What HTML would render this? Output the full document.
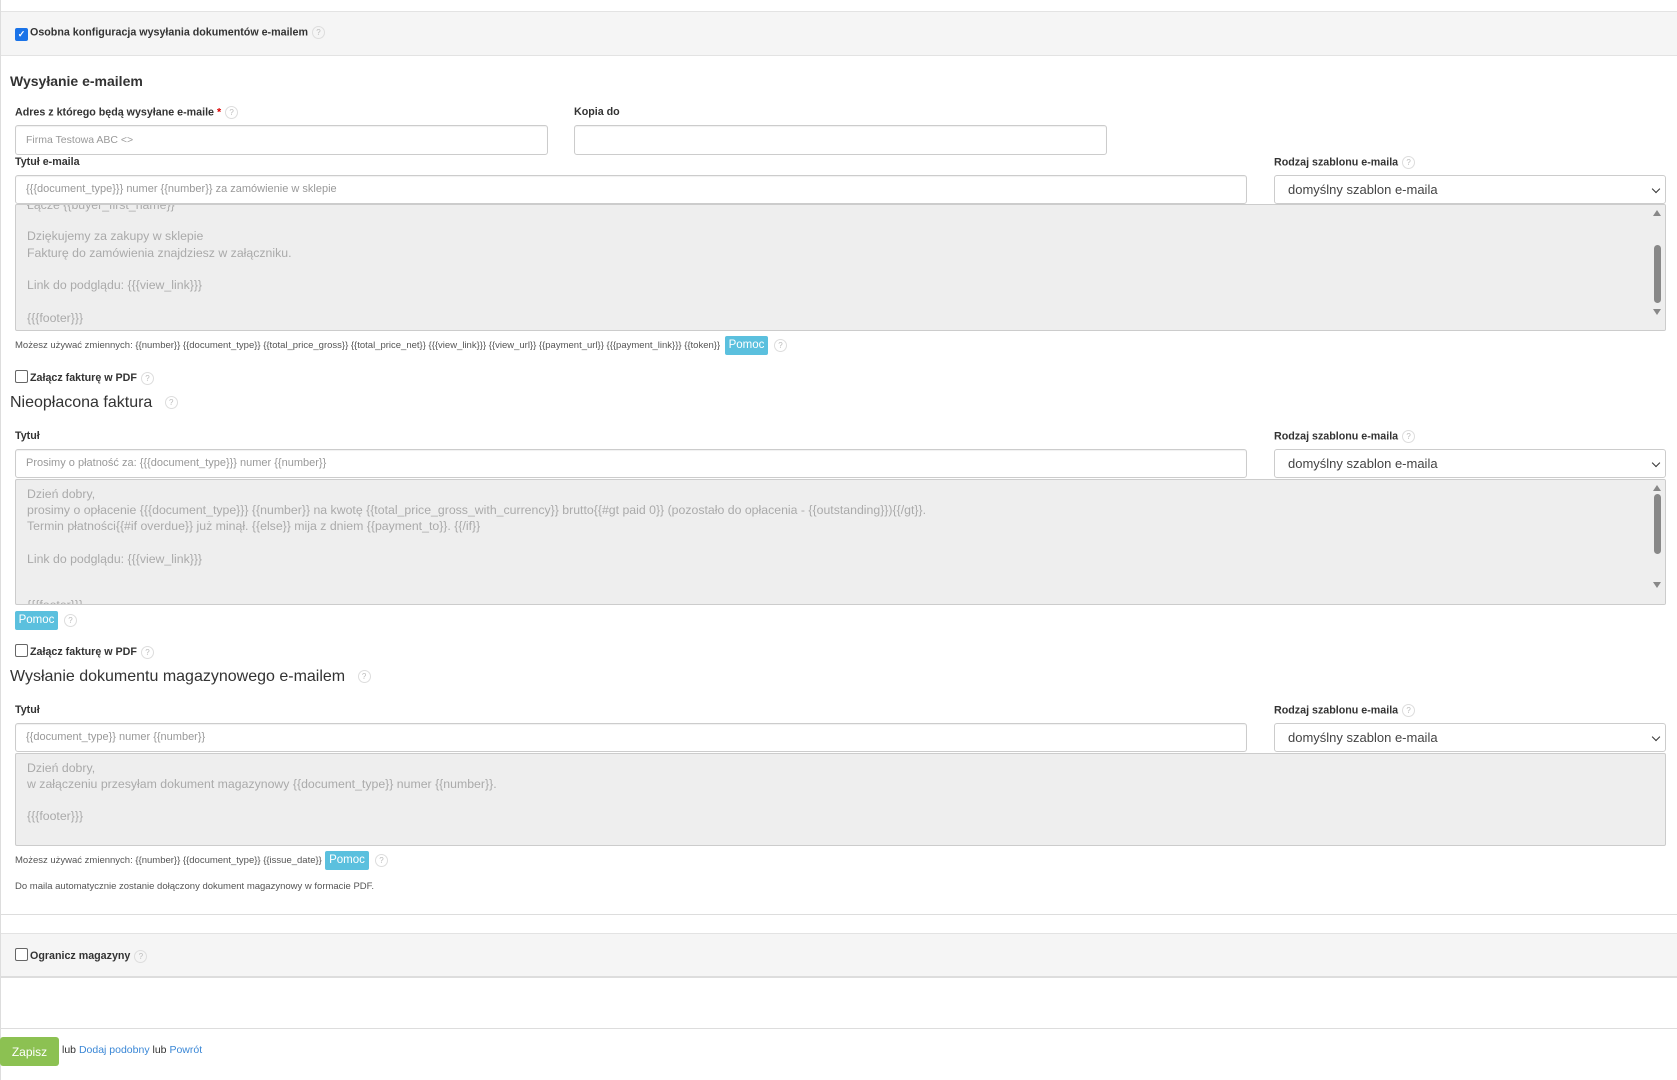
<!DOCTYPE html><html><head><meta charset="utf-8"><style>
body{margin:0;width:1677px;height:1080px;background:#fff;font-family:"Liberation Sans",sans-serif;color:#333;position:relative;overflow:hidden}
.a{position:absolute}
.lbl{position:absolute;font-size:10.7px;font-weight:bold;color:#333;white-space:nowrap}
.q{display:inline-block;width:11px;height:11px;border:1px solid #ddd;border-radius:50%;font-size:8px;color:#bbb;text-align:center;line-height:11px;font-weight:normal;vertical-align:middle;margin-left:4px}
.in{position:absolute;border:1px solid #ccc;border-radius:3px;background:#fff;box-sizing:border-box;font-size:11px;color:#999;padding-left:10px;white-space:nowrap;box-shadow:inset 0 1px 1px rgba(0,0,0,.06)}
.ta{position:absolute;border:1px solid #ccc;border-radius:2px;background:#eee;box-sizing:border-box;overflow:hidden;font-size:12.3px;color:#aaa}
.ta .t{position:absolute;left:11px;white-space:nowrap}
.sel{position:absolute;border:1px solid #ccc;border-radius:3px;background:#fff;box-sizing:border-box;font-size:13px;color:#444;padding-left:13px;white-space:nowrap}
.sel:after{content:"";position:absolute;right:6px;top:10px;width:5px;height:5px;border-right:1.5px solid #333;border-bottom:1.5px solid #333;transform:rotate(45deg)}
.h{position:absolute;font-size:16px;color:#333;white-space:nowrap}
.btn{position:absolute;background:#5bc0de;color:#fff;font-size:11.5px;border-radius:2px;text-align:center}
.sb{position:absolute;right:0;top:0;bottom:0;width:15px;background:#eee}
.sb i{position:absolute;left:4px;width:7px;border-radius:4px;background:#888}
.sb b{position:absolute;left:3px;width:0;height:0;border-left:4px solid transparent;border-right:4px solid transparent}
.small{position:absolute;font-size:9.5px;color:#555;white-space:nowrap}
.cb{display:inline-block;width:11px;height:11px;border:1px solid #666;border-radius:2px;vertical-align:-2px;margin-right:2px;background:#fff}
</style></head><body>
<div class="a" style="left:0;top:0;width:1px;height:1080px;background:#ddd"></div>
<div class="a" style="left:1px;top:11px;width:1676px;height:43px;background:#f5f5f5;border-top:1px solid #e3e3e3;border-bottom:1px solid #e3e3e3"></div>
<div class="lbl" style="left:15px;top:26px"><span class="cb" style="background:#1a73e8;border-color:#1a73e8;color:#fff;font-size:9px;text-align:center;line-height:11px">✓</span>Osobna konfiguracja wysyłania dokumentów e-mailem<span class="q">?</span></div>
<div class="a" style="left:10px;top:73px;font-size:14px;font-weight:bold;color:#333">Wysyłanie e-mailem</div>
<div class="lbl" style="left:15px;top:106px">Adres z którego będą wysyłane e-maile <span style="color:#d00">*</span><span class="q">?</span></div>
<div class="lbl" style="left:574px;top:106px">Kopia do</div>
<div class="in" style="left:15px;top:125px;width:533px;height:30px;line-height:28px;font-size:10.5px">Firma Testowa ABC &lt;&gt;</div>
<div class="in" style="left:574px;top:125px;width:533px;height:30px"></div>
<div class="lbl" style="left:15px;top:156px">Tytuł e-maila</div>
<div class="lbl" style="left:1274px;top:156px">Rodzaj szablonu e-maila<span class="q">?</span></div>
<div class="in" style="left:15px;top:175px;width:1232px;height:29px;line-height:27px">{{{document_type}}} numer {{number}} za zamówienie w sklepie</div>
<div class="sel" style="left:1274px;top:175px;width:392px;height:29px;line-height:27px">domyślny szablon e-maila</div>
<div class="ta" style="left:15px;top:204px;width:1651px;height:127px">
<div class="t" style="top:-7px">Łącze {{buyer_first_name}}</div><div class="t" style="top:24px">Dziękujemy za zakupy w sklepie</div><div class="t" style="top:41px">Fakturę do zamówienia znajdziesz w załączniku.</div><div class="t" style="top:73px">Link do podglądu: {{{view_link}}}</div><div class="t" style="top:106px">{{{footer}}}</div>
<div class="sb"><b style="top:5px;border-bottom:6px solid #888"></b><i style="top:40px;height:58px"></i><b style="top:104px;border-top:6px solid #888"></b></div></div>
<div class="small" style="left:15px;top:340px">Możesz używać zmiennych: {{number}} {{document_type}} {{total_price_gross}} {{total_price_net}} {{{view_link}}} {{view_url}} {{payment_url}} {{{payment_link}}} {{token}}</div>
<div class="btn" style="left:725px;top:336px;width:43px;height:19px;line-height:19px">Pomoc</div>
<span class="q a" style="left:770px;top:339px">?</span>
<div class="lbl" style="left:15px;top:370px"><span class="cb"></span>Załącz fakturę w PDF<span class="q">?</span></div>
<div class="h" style="left:10px;top:394px">Nieopłacona faktura <span class="q" style="margin-left:8px">?</span></div>
<div class="lbl" style="left:15px;top:430px">Tytuł</div>
<div class="lbl" style="left:1274px;top:430px">Rodzaj szablonu e-maila<span class="q">?</span></div>
<div class="in" style="left:15px;top:449px;width:1232px;height:29px;line-height:27px">Prosimy o płatność za: {{{document_type}}} numer {{number}}</div>
<div class="sel" style="left:1274px;top:449px;width:392px;height:29px;line-height:27px">domyślny szablon e-maila</div>
<div class="ta" style="left:15px;top:479px;width:1651px;height:126px">
<div class="t" style="top:7px">Dzień dobry,</div><div class="t" style="top:23px">prosimy o opłacenie {{{document_type}}} {{number}} na kwotę {{total_price_gross_with_currency}} brutto{{#gt paid 0}} (pozostało do opłacenia - {{outstanding}}){{/gt}}.</div><div class="t" style="top:39px">Termin płatności{{#if overdue}} już minął. {{else}} mija z dniem {{payment_to}}. {{/if}}</div><div class="t" style="top:72px">Link do podglądu: {{{view_link}}}</div><div class="t" style="top:118px">{{{footer}}}</div>
<div class="sb"><b style="top:5px;border-bottom:6px solid #888"></b><i style="top:14px;height:60px"></i><b style="top:102px;border-top:6px solid #888"></b></div></div>
<div class="btn" style="left:15px;top:611px;width:43px;height:19px;line-height:19px">Pomoc</div>
<span class="q a" style="left:60px;top:614px">?</span>
<div class="lbl" style="left:15px;top:644px"><span class="cb"></span>Załącz fakturę w PDF<span class="q">?</span></div>
<div class="h" style="left:10px;top:668px">Wysłanie dokumentu magazynowego e-mailem <span class="q" style="margin-left:8px">?</span></div>
<div class="lbl" style="left:15px;top:704px">Tytuł</div>
<div class="lbl" style="left:1274px;top:704px">Rodzaj szablonu e-maila<span class="q">?</span></div>
<div class="in" style="left:15px;top:723px;width:1232px;height:29px;line-height:27px">{{document_type}} numer {{number}}</div>
<div class="sel" style="left:1274px;top:723px;width:392px;height:29px;line-height:27px">domyślny szablon e-maila</div>
<div class="ta" style="left:15px;top:753px;width:1651px;height:93px">
<div class="t" style="top:7px">Dzień dobry,</div><div class="t" style="top:23px">w załączeniu przesyłam dokument magazynowy {{document_type}} numer {{number}}.</div><div class="t" style="top:55px">{{{footer}}}</div></div>
<div class="small" style="left:15px;top:855px">Możesz używać zmiennych: {{number}} {{document_type}} {{issue_date}}</div>
<div class="btn" style="left:325px;top:851px;width:44px;height:19px;line-height:19px">Pomoc</div>
<span class="q a" style="left:371px;top:854px">?</span>
<div class="small" style="left:15px;top:881px">Do maila automatycznie zostanie dołączony dokument magazynowy w formacie PDF.</div>
<div class="a" style="left:1px;top:914px;width:1676px;height:1px;background:#ddd"></div>
<div class="a" style="left:1px;top:933px;width:1676px;height:42px;background:#f5f5f5;border-top:1px solid #e3e3e3;border-bottom:2px solid #ddd"></div>
<div class="lbl" style="left:15px;top:948px"><span class="cb"></span>Ogranicz magazyny<span class="q">?</span></div>
<div class="a" style="left:1px;top:1028px;width:1676px;height:1px;background:#ddd"></div>
<div class="a" style="left:0;top:1037px;width:59px;height:29px;background:#8cc152;border-radius:3px;color:#fff;font-size:12px;text-align:center;line-height:31px">Zapisz</div>
<div class="a" style="left:62px;top:1044px;font-size:10.5px;color:#333">lub <span style="color:#3a87d6">Dodaj podobny</span> lub <span style="color:#3a87d6">Powrót</span></div>
</body></html>
